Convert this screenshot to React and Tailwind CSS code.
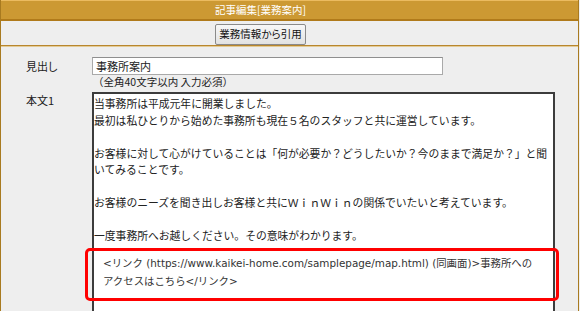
import React from 'react';

const bodyLines = [
  '当事務所は平成元年に開業しました。',
  '最初は私ひとりから始めた事務所も現在５名のスタッフと共に運営しています。',
  '',
  'お客様に対して心がけていることは「何が必要か？どうしたいか？今のままで満足か？」と聞',
  'いてみることです。',
  '',
  'お客様のニーズを聞き出しお客様と共にＷｉｎＷｉｎの関係でいたいと考えています。',
  '',
  '一度事務所へお越しください。その意味がわかります。',
];

const App = () => {
  return (
    <div
      className="relative w-[580px] h-[311px] overflow-hidden bg-[#eeeeee] text-[#222]"
      style={{ fontFamily: '"Noto Sans CJK JP", "Noto Sans", sans-serif' }}
    >
      <div className="w-[579px] h-full border-l border-r border-[#a87a20]">
        {/* title bar */}
        <div className="h-[21px] pr-[58px] bg-[#cc9933] border-t border-t-[#ebbb60] border-b-2 border-b-[#b07a1a] flex items-center justify-center text-white text-[10.5px] leading-none [font-feature-settings:'palt']">
          記事編集[業務案内]
        </div>

        {/* button row */}
        <div className="h-[25px] pt-[3px] pr-[58px] flex justify-center border-b border-b-[#b8862e]">
          <button className="h-[21px] px-[3px] border border-[#8a8a8a] rounded-[2px] bg-gradient-to-b from-[#f7f7f7] to-[#e2e2e2] text-[10.5px] leading-none text-[#111] [font-feature-settings:'palt']">
            業務情報から引用
          </button>
        </div>
        <div className="h-px bg-[#e3cb96]" />

        {/* form */}
        <div className="pt-[10px]">
          <div className="flex">
            <div className="w-[91px] pl-[25px] pt-[1px] text-[11px] leading-[16px] [font-feature-settings:'palt']">見出し</div>
            <div>
              <div className="w-[351px] h-[18px] bg-white border border-[#a9a9a9] border-t-[#8f8f8f] pl-[3px] text-[11px] leading-[16px]">
                事務所案内
              </div>
              <div className="pl-[1px] text-[10.5px] leading-[13px]">（全角40文字以内 入力必須）</div>
            </div>
          </div>

          <div className="flex mt-[4px]">
            <div className="w-[91px] pl-[25px] text-[11px] leading-[16px]">本文1</div>
            <div className="w-[463px] h-[260px] bg-white border-2 border-[#3c3c3c] pt-[1px] text-[10.8px] leading-[16.5px]">
              {bodyLines.map((line, i) => (
                <div key={i} className="h-[16.5px] whitespace-nowrap">
                  {line}
                </div>
              ))}
              <div
                className="mt-[10px] pl-[9px] text-[10.4px] leading-[18px] text-[#333] whitespace-nowrap"
                style={{ fontFamily: '"DejaVu Sans", "Noto Sans CJK JP", sans-serif' }}
              >
                <div>&lt;リンク (https://www.kaikei-home.com/samplepage/map.html) (同画面)&gt;事務所への</div>
                <div>アクセスはこちら&lt;/リンク&gt;</div>
              </div>
            </div>
          </div>
        </div>
      </div>

      {/* red annotation */}
      <div className="absolute left-[85px] top-[248px] w-[474px] h-[53px] border-[3px] border-[#ff0000] rounded-[5px]" />
    </div>
  );
};

export default App;
